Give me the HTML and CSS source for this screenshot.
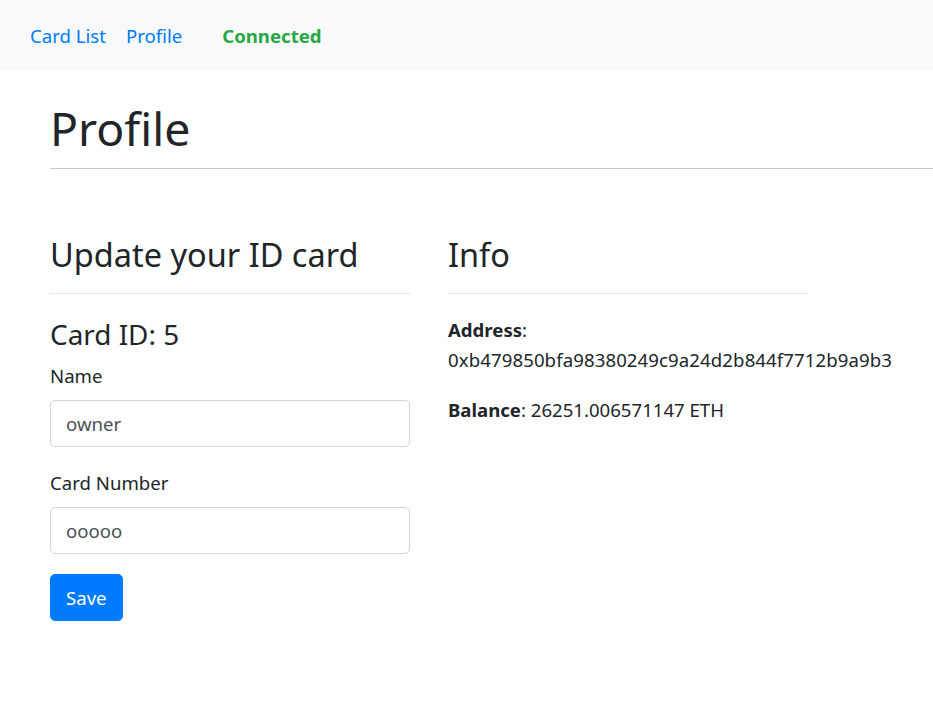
FILE: index.html
```html
<!DOCTYPE html>
<html>
<head>
<meta charset="utf-8">
<title>Profile</title>
<link rel="stylesheet" href="styles.css">
</head>
<body>
<nav class="navbar">
  <a class="nav-link" href="#">Card List</a>
  <a class="nav-link" href="#">Profile</a>
  <span class="status">Connected</span>
</nav>
<main class="page">
  <header class="page-header">
    <h1 class="title">Profile</h1>
  </header>
  <div class="row">
    <section class="col">
      <h3 class="section-title">Update your ID card</h3>
      <hr class="divider">
      <h4 class="card-id">Card ID: 5</h4>
      <form class="form">
        <div class="form-group">
          <label class="label" for="name">Name</label>
          <input class="input" id="name" type="text" value="owner">
        </div>
        <div class="form-group last">
          <label class="label" for="num">Card Number</label>
          <input class="input" id="num" type="text" value="ooooo">
        </div>
        <button class="btn" type="button">Save</button>
      </form>
    </section>
    <section class="col">
      <h3 class="section-title">Info</h3>
      <hr class="divider">
      <p class="info first"><strong>Address</strong>:<span class="value">0xb479850bfa98380249c9a24d2b844f7712b9a9b3</span></p>
      <p class="info"><strong>Balance</strong>: 26251.006571147 ETH</p>
    </section>
  </div>
</main>
</body>
</html>
```
FILE: styles.css
```css
* { box-sizing: border-box; }
html, body { margin: 0; padding: 0; }
body {
  font-family: "Noto Sans", "Open Sans", sans-serif;
  font-size: 18.6px;
  line-height: 30px;
  color: #212529;
  background: #fff;
  overflow: hidden;
}
.navbar {
  height: 70px;
  background: #f8f9fa;
  display: flex;
  align-items: center;
  padding: 2px 20px 0;
}
.nav-link {
  color: #007bff;
  text-decoration: none;
  padding: 0 10px;
}
.status {
  color: #28a745;
  font-weight: 700;
  margin-left: 30px;
}
.page {
  padding-left: 50px;
}
.page-header {
  margin-top: 28px;
  border-bottom: 1px solid #c8c8c8;
  padding-bottom: 10px;
}
.title {
  margin: 0;
  font-size: 46.4px;
  line-height: 60px;
  font-weight: 400;
}
.row {
  display: flex;
  gap: 38px;
  margin-top: 65px;
}
.col {
  width: 360px;
}
.section-title {
  margin: 0;
  font-size: 32.5px;
  line-height: 42px;
  font-weight: 400;
}
.divider {
  margin: 17px 0 0;
  border: 0;
  border-top: 1px solid #e5e5e5;
  height: 0;
}
.card-id {
  margin: 22px 0 0;
  font-size: 27.9px;
  line-height: 36px;
  font-weight: 400;
}
.form { margin: 9px 0 0; }
.form-group { margin-bottom: 21px; }
.form-group.last { margin-bottom: 20px; }
.label {
  display: block;
  margin-bottom: 9px;
}
.input {
  display: block;
  width: 100%;
  height: 47px;
  padding: 0 15px;
  font-family: inherit;
  font-size: 18.6px;
  color: #495057;
  border: 1px solid #ced4da;
  border-radius: 5px;
  background: #fff;
}
.btn {
  font-family: inherit;
  font-size: 18.6px;
  line-height: 30px;
  color: #fff;
  background: #007bff;
  border: 1px solid #007bff;
  border-radius: 5px;
  padding: 7.5px 15px;
  height: 47px;
}
.info {
  margin: 0 0 20px;
}
.info.first { margin-top: 21px; }
.info strong { font-weight: 700; }
.value {
  display: block;
  letter-spacing: 0.1px;
}
```
